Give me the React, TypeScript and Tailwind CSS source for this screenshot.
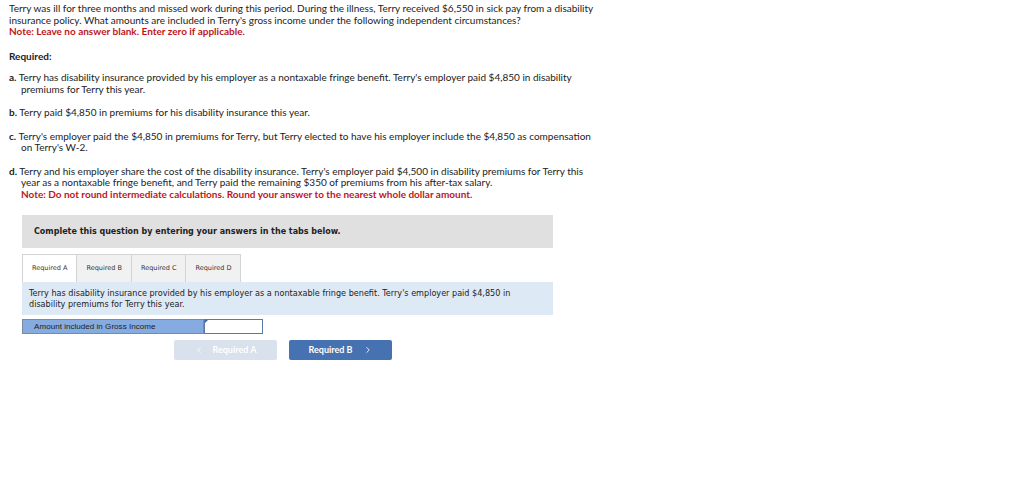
import { ChevronLeft, ChevronRight } from "lucide-react";

const parts = [
  {
    key: "a",
    text: "Terry has disability insurance provided by his employer as a nontaxable fringe benefit. Terry's employer paid $4,850 in disability premiums for Terry this year.",
  },
  { key: "b", text: "Terry paid $4,850 in premiums for his disability insurance this year." },
  {
    key: "c",
    text: "Terry's employer paid the $4,850 in premiums for Terry, but Terry elected to have his employer include the $4,850 as compensation on Terry's W-2.",
  },
];

const tabs = ["Required A", "Required B", "Required C", "Required D"];

export default function App() {
  return (
    <div className="w-[1024px] h-[482px] bg-white text-[#222] font-['Lato','Liberation_Sans',sans-serif] text-[10px] leading-[11.5px]">
      <div className="pt-[3px] pl-[9px] w-[600px]">
        <p>
          Terry was ill for three months and missed work during this period. During the illness, Terry received $6,550 in
          sick pay from a disability insurance policy. What amounts are included in Terry's gross income under the
          following independent circumstances?
        </p>
        <p className="font-bold text-[#c0161b]">Note: Leave no answer blank. Enter zero if applicable.</p>

        <p className="font-bold mt-[13px]">Required:</p>

        <div className="mt-[10px] flex flex-col gap-[12px]">
          {parts.map((p) => (
            <p key={p.key} className="pl-[12px] -indent-[12px] pr-[6px]">
              <span className="font-bold">{p.key}.</span> {p.text}
            </p>
          ))}
          <div className="pl-[12px] -indent-[12px] pr-[6px]">
            <p>
              <span className="font-bold">d.</span> Terry and his employer share the cost of the disability insurance.
              Terry's employer paid $4,500 in disability premiums for Terry this year as a nontaxable fringe benefit, and
              Terry paid the remaining $350 of premiums from his after-tax salary.
            </p>
            <p className="font-bold text-[#c0161b] indent-0">
              Note: Do not round intermediate calculations. Round your answer to the nearest whole dollar amount.
            </p>
          </div>
        </div>
      </div>

      <div className="ml-[22px] mt-[15px] w-[531px]">
        <div className="h-[33px] bg-[#e0e0e0] flex items-center pl-[12px] font-['DejaVu_Sans',sans-serif] font-bold text-[8px]">
          Complete this question by entering your answers in the tabs below.
        </div>

        <div className="mt-[6px] flex font-['DejaVu_Sans',sans-serif] text-[6.5px]">
          {tabs.map((t, i) => (
            <div
              key={t}
              className={
                i === 0
                  ? "h-[28px] px-[9px] flex items-center bg-white border border-b-0 border-[#d4d4d4] text-[#333]"
                  : "h-[28px] px-[9px] flex items-center bg-[#f1f1f1] border border-l-0 border-b-0 border-[#d4d4d4] text-[#333]"
              }
            >
              {t}
            </div>
          ))}
        </div>

        <div className="h-[33px] bg-[#dee9f6] pl-[7px] pr-[20px] flex items-center font-['DejaVu_Sans',sans-serif] text-[8.1px] leading-[10.5px] text-[#222]">
          Terry has disability insurance provided by his employer as a nontaxable fringe benefit. Terry's employer paid
          $4,850 in disability premiums for Terry this year.
        </div>

        <div className="mt-[4px] flex h-[15px]">
          <div className="w-[182px] bg-[#86abe0] border border-[#7a8aa0] pl-[11px] flex items-center font-['Liberation_Sans',sans-serif] text-[8.1px] text-[#222]">
            Amount included in Gross Income
          </div>
          <div className="relative w-[59px] bg-white border border-[#5b79a8]">
            <span className="absolute left-0 top-0 w-0 h-0 border-t-[3px] border-r-[3px] border-t-[#3b66b0] border-r-transparent" />
          </div>
        </div>

        <div className="mt-[6px] flex gap-[12px] ml-[152px] font-bold text-[9px] text-white">
          <div className="w-[103px] h-[20px] rounded-[2px] bg-[#d8e1ec] flex items-center justify-center gap-[8px]">
            <ChevronLeft size={10} strokeWidth={2} />
            <span>Required A</span>
          </div>
          <div className="w-[103px] h-[20px] rounded-[2px] bg-[#4672b2] flex items-center justify-center gap-[10px]">
            <span>Required B</span>
            <ChevronRight size={10} strokeWidth={2} />
          </div>
        </div>
      </div>
    </div>
  );
}
